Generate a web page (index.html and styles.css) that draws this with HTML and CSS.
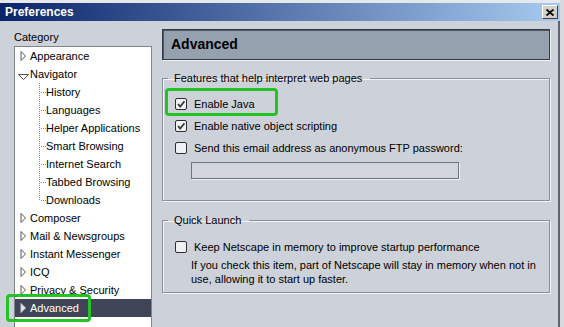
FILE: index.html
```html
<!DOCTYPE html>
<html lang="en">
<head>
    <meta charset="UTF-8">
    <meta name="viewport" content="width=device-width, initial-scale=1.0">
    <title>Preferences</title>
    <link rel="stylesheet" href="styles.css">
</head>
<body>
    <div class="window">
        <div class="titlebar">
            <span class="title">Preferences</span>
            <span class="close-btn">
                <svg width="8" height="7" viewBox="0 0 8 7"><path d="M0.5 0.5 L7.5 6.5 M7.5 0.5 L0.5 6.5" stroke="#000" stroke-width="1.8"/></svg>
            </span>
        </div>
        <div class="dialog-body">
            <div class="sidebar">
                <div class="cat-label">Category</div>
                <ul class="tree">
                    <li class="row"><svg class="twisty" width="15" height="18"><path d="M6 4.5 L10.5 9 L6 13.5 Z" fill="#fff" stroke="#555"/></svg>Appearance</li>
                    <li class="row"><svg class="twisty" width="15" height="18"><path d="M3.5 9.5 L13.5 9.5 L8.5 14.5 Z" fill="#fff" stroke="#555"/></svg>Navigator</li>
                    <li class="row child">History</li>
                    <li class="row child">Languages</li>
                    <li class="row child">Helper Applications</li>
                    <li class="row child">Smart Browsing</li>
                    <li class="row child">Internet Search</li>
                    <li class="row child">Tabbed Browsing</li>
                    <li class="row child last">Downloads</li>
                    <li class="row"><svg class="twisty" width="15" height="18"><path d="M6 4.5 L10.5 9 L6 13.5 Z" fill="#fff" stroke="#555"/></svg>Composer</li>
                    <li class="row"><svg class="twisty" width="15" height="18"><path d="M6 4.5 L10.5 9 L6 13.5 Z" fill="#fff" stroke="#555"/></svg>Mail &amp; Newsgroups</li>
                    <li class="row"><svg class="twisty" width="15" height="18"><path d="M6 4.5 L10.5 9 L6 13.5 Z" fill="#fff" stroke="#555"/></svg>Instant Messenger</li>
                    <li class="row"><svg class="twisty" width="15" height="18"><path d="M6 4.5 L10.5 9 L6 13.5 Z" fill="#fff" stroke="#555"/></svg>ICQ</li>
                    <li class="row"><svg class="twisty" width="15" height="18"><path d="M6 4.5 L10.5 9 L6 13.5 Z" fill="#fff" stroke="#555"/></svg>Privacy &amp; Security</li>
                    <li class="row selected"><svg class="twisty" width="15" height="18"><path d="M6 4.5 L10.5 9 L6 13.5 Z" fill="#e4e6ea" stroke="#c8ccd2"/></svg>Advanced<span class="highlight hl-advanced"></span></li>
                </ul>
            </div>
            <div class="main">
                <div class="panel-header">Advanced</div>

                <fieldset class="group">
                    <legend>Features that help interpret web pages</legend>
                    <div class="check-row first">
                        <span class="checkbox"><svg width="10" height="10"><path d="M2 5 L4.2 7.5 L8.5 2.2" fill="none" stroke="#3a3a3a" stroke-width="1.8"/></svg></span>
                        Enable Java
                        <span class="highlight hl-java"></span>
                    </div>
                    <div class="check-row">
                        <span class="checkbox"><svg width="10" height="10"><path d="M2 5 L4.2 7.5 L8.5 2.2" fill="none" stroke="#3a3a3a" stroke-width="1.8"/></svg></span>
                        Enable native object scripting
                    </div>
                    <div class="check-row">
                        <span class="checkbox"></span>
                        Send this email address as anonymous FTP password:
                    </div>
                    <input class="text-field" type="text">
                </fieldset>

                <fieldset class="group">
                    <legend>Quick Launch</legend>
                    <div class="check-row first">
                        <span class="checkbox"></span>
                        Keep Netscape in memory to improve startup performance
                    </div>
                    <p class="hint">If you check this item, part of Netscape will stay in memory when not in use, allowing it to start up faster.</p>
                </fieldset>
            </div>
        </div>
    </div>
</body>
</html>
```

FILE: styles.css
```css
body {
    margin: 0;
    background-color: #d6d9de;
    font-family: "Liberation Sans", Arial, sans-serif;
    font-size: 11px;
    color: #000;
}
.window {
    width: 560px;
    height: 327px;
    overflow: hidden;
    background-color: #cdd1d9;
    border-top: 3px solid #e6e8ec;
    box-sizing: border-box;
}
.titlebar {
    height: 18px;
    display: flex;
    align-items: center;
    justify-content: space-between;
    padding-left: 5px;
    background: linear-gradient(to right, #0a246a, #a6caf0);
}
.title {
    color: #fff;
    font-weight: bold;
    font-size: 12px;
    line-height: 18px;
}
.close-btn {
    width: 16px;
    height: 14px;
    box-sizing: border-box;
    margin-right: 2px;
    display: flex;
    align-items: center;
    justify-content: center;
    background-color: #d4d0c8;
    border: 1px solid;
    border-color: #fff #404040 #404040 #fff;
}
.dialog-body {
    display: flex;
    gap: 10px;
    padding-left: 14px;
    height: 306px;
    border-right: 2px solid #5f636b;
}
.sidebar {
    width: 138px;
    padding-top: 10px;
}
.cat-label {
    line-height: 13px;
    margin-bottom: 2px;
}
.tree {
    list-style: none;
    margin: 0;
    padding: 0;
    height: 300px;
    background-color: #fff;
    border: 1px solid #7f838b;
}
.row {
    position: relative;
    display: flex;
    align-items: center;
    height: 18px;
    line-height: 13px;
    white-space: nowrap;
}
.twisty {
    flex: none;
}
.row.child {
    padding-left: 31px;
    background:
        repeating-linear-gradient(to bottom, #8a8a8a 0 1px, transparent 1px 2px) 24px 0 / 1px 100% no-repeat,
        repeating-linear-gradient(to right, #8a8a8a 0 1px, transparent 1px 2px) 26px 9px / 6px 1px no-repeat;
}
.row.child.last {
    background:
        repeating-linear-gradient(to bottom, #8a8a8a 0 1px, transparent 1px 2px) 24px 0 / 1px 10px no-repeat,
        repeating-linear-gradient(to right, #8a8a8a 0 1px, transparent 1px 2px) 26px 9px / 6px 1px no-repeat;
}
.row.selected {
    background-color: #3f4556;
    color: #fff;
}
.highlight {
    position: absolute;
    border: 3px solid #22c322;
    border-radius: 4px;
    box-sizing: border-box;
}
.hl-advanced {
    left: -9px;
    top: -5px;
    width: 85px;
    height: 28px;
}
.hl-java {
    left: -10px;
    top: -5px;
    width: 113px;
    height: 28px;
}
.main {
    width: 388px;
    padding-top: 8px;
}
.panel-header {
    height: 31px;
    box-sizing: border-box;
    padding-left: 8px;
    line-height: 28px;
    font-size: 14px;
    font-weight: bold;
    background-color: #95a1af;
    border: 1px solid #343b48;
    box-shadow: inset 1px 1px 0 #4d5566, 1px 1px 0 #eef0f3;
}
.group {
    margin: 12px 0 0 0;
    padding: 0 0 21px 0;
    border: 1px solid #8c9099;
    box-shadow: inset 1px 1px 0 #f2f3f6, 1px 1px 0 #f2f3f6;
}
.group + .group {
    margin-top: 13px;
    padding-bottom: 6px;
}
.group legend {
    margin-left: 5px;
    padding: 0 8px 0 6px;
    line-height: 13px;
}
.check-row {
    position: relative;
    display: flex;
    align-items: center;
    height: 22px;
    margin-left: 12px;
    line-height: 13px;
}
.check-row.first {
    margin-top: 8px;
}
.group + .group .check-row.first {
    margin-top: 9px;
}
.checkbox {
    width: 12px;
    height: 12px;
    box-sizing: border-box;
    margin-right: 7px;
    display: flex;
    align-items: center;
    justify-content: center;
    background-color: #eef0f4;
    border: 1px solid #2e2e2e;
    border-radius: 2px;
}
.text-field {
    display: block;
    width: 268px;
    height: 17px;
    box-sizing: border-box;
    margin: 3px 0 0 28px;
    padding: 0;
    background-color: #d2d5db;
    border: 1px solid #70747c;
    box-shadow: 1px 1px 0 #eef0f2;
}
.hint {
    width: 350px;
    margin: 0 0 0 28px;
    line-height: 14px;
}
```
